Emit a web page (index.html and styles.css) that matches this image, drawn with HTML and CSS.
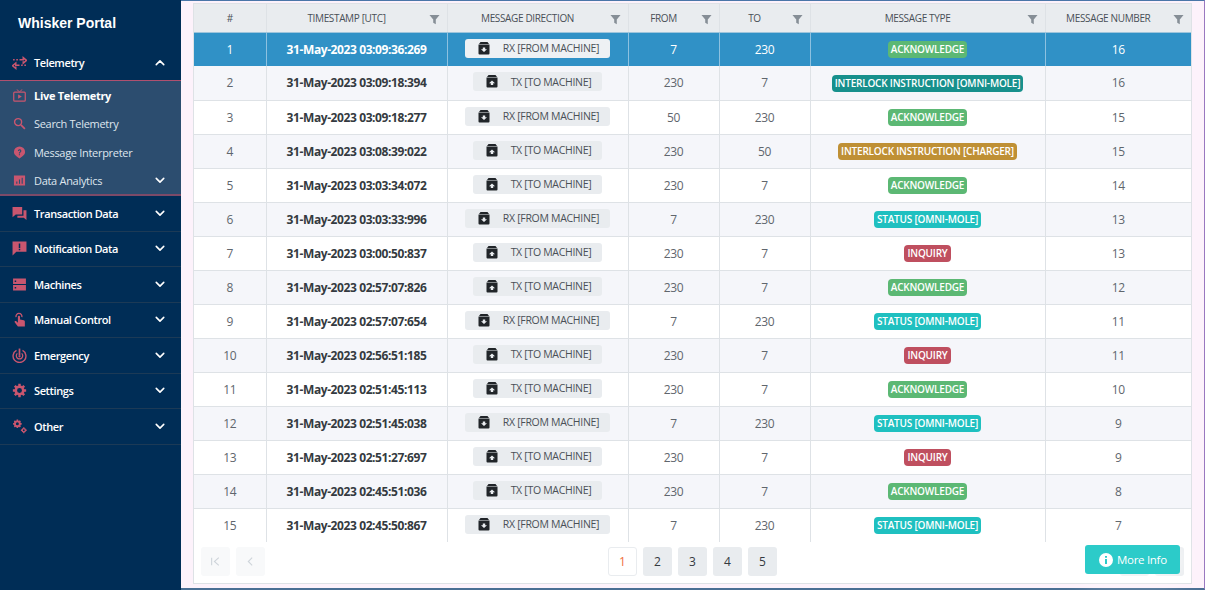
FILE: index.html
```html
<!DOCTYPE html>
<html lang="en">
<head>
    <meta charset="UTF-8">
    <meta name="viewport" content="width=device-width, initial-scale=1.0">
    <title>Whisker Portal</title>
    <link rel="stylesheet" href="styles.css">
</head>
<body>

    <svg class="sprites" width="0" height="0">
        <symbol id="i-chev-down" viewBox="0 0 12 8"><path d="M1.5 1.5 6 6l4.5-4.5" fill="none" stroke="currentColor" stroke-width="1.9" stroke-linecap="round" stroke-linejoin="round"/></symbol>
        <symbol id="i-chev-up" viewBox="0 0 12 8"><path d="M1.5 6.5 6 2l4.5 4.5" fill="none" stroke="currentColor" stroke-width="1.9" stroke-linecap="round" stroke-linejoin="round"/></symbol>
        <symbol id="i-funnel" viewBox="0 0 12 12"><path d="M.5 1h11L7.4 6v5.2L4.6 9.6V6z" fill="currentColor"/></symbol>
        <symbol id="i-rx" viewBox="0 0 12 13"><path d="M2.5 0h7L11 2H1z" fill="currentColor"/><path fill-rule="evenodd" d="M.5 2.500h11v9a1 1 0 0 1-1 1h-9a1 1 0 0 1-1-1zM4.800 5.500v1.700H3L6 10l3-2.800H7.200V5.500z" fill="currentColor"/></symbol>
        <symbol id="i-tx" viewBox="0 0 12 13"><path d="M2.5 0h7L11 2H1z" fill="currentColor"/><path fill-rule="evenodd" d="M.5 2.500h11v9a1 1 0 0 1-1 1h-9a1 1 0 0 1-1-1zM4.800 10V8.300H3L6 5.500l3 2.800H7.200V10z" fill="currentColor"/></symbol>
    </svg>

    <div class="app">
        <aside class="sidebar">
            <div class="brand">Whisker Portal</div>

            <div class="nav-item open">
                <svg class="nav-icon" viewBox="0 0 14 14"><path d="M1 4.500h1.500M4 4.500h1.500M7 4.500h3.500V2.500L13.500 5 10.500 7.500V5.800" fill="none" stroke="currentColor" stroke-width="1.400"/><path d="M13 9.500h-1.500M10 9.500H8.500M7 9.500H3.500V7.500L.5 10l3 2.500v-1.700" fill="none" stroke="currentColor" stroke-width="1.400"/></svg>
                <span class="nav-label">Telemetry</span>
                <svg class="nav-chev"><use href="#i-chev-up"/></svg>
            </div>
            <div class="subnav">
                <div class="sub-item active">
                    <svg class="sub-icon" viewBox="0 0 14 14"><path d="M4 .5 7 3l3-2.500" fill="none" stroke="currentColor" stroke-width="1"/><rect x=".8" y="3.300" width="12.400" height="9.700" rx="1" fill="none" stroke="currentColor" stroke-width="1.300"/><path d="M5.500 5.800v4.700L9.500 8z" fill="currentColor"/></svg>
                    <span>Live Telemetry</span>
                </div>
                <div class="sub-item">
                    <svg class="sub-icon" viewBox="0 0 14 14"><circle cx="5.500" cy="5.500" r="3.800" fill="none" stroke="currentColor" stroke-width="1.500"/><path d="m8.500 8.500 4.300 4.300" stroke="currentColor" stroke-width="1.800"/></svg>
                    <span>Search Telemetry</span>
                </div>
                <div class="sub-item">
                    <svg class="sub-icon" viewBox="0 0 14 14"><path fill-rule="evenodd" d="M7 .5a6 6 0 0 1 6 6c0 3-3 5-6 7-3-2-6-4-6-7a6 6 0 0 1 6-6zM5.300 5.300c0-2.300 3.700-2.300 3.700 0 0 1.400-1.500 1.300-1.500 2.700H6.300c0-1.900 1.500-1.800 1.500-2.700 0-.8-1.300-.8-1.300 0zM6.300 8.800h1.200V10H6.300z" fill="currentColor"/></svg>
                    <span>Message Interpreter</span>
                </div>
                <div class="sub-item">
                    <svg class="sub-icon" viewBox="0 0 14 14"><path fill-rule="evenodd" d="M1 1.500h12v11H1zM3.500 8v2.500h1.200V8zM6.400 6v4.500h1.200V6zM9.300 4v6.500h1.200V4z" fill="currentColor"/></svg>
                    <span>Data Analytics</span>
                    <svg class="nav-chev"><use href="#i-chev-down"/></svg>
                </div>
            </div>

            <div class="nav-item">
                <svg class="nav-icon" viewBox="0 0 14 14"><path d="M.5 1h9v7h-6L.5 10.500z" fill="currentColor"/><path d="M10.700 4h2.800v9L11 11H5V9.200h5.700z" fill="currentColor"/></svg>
                <span class="nav-label">Transaction Data</span>
                <svg class="nav-chev"><use href="#i-chev-down"/></svg>
            </div>
            <div class="nav-item">
                <svg class="nav-icon" viewBox="0 0 14 14"><path fill-rule="evenodd" d="M.5.500h13V10H4L.5 13.500zM6.300 2.300v4.200h1.400V2.300zM6.300 7.300v1.400h1.400V7.300z" fill="currentColor"/></svg>
                <span class="nav-label">Notification Data</span>
                <svg class="nav-chev"><use href="#i-chev-down"/></svg>
            </div>
            <div class="nav-item">
                <svg class="nav-icon" viewBox="0 0 14 14"><path fill-rule="evenodd" d="M1 1.500h12v5H1zM2.500 3.300v1.400h1.400V3.300zM1 7.500h12v5H1zM2.500 9.300v1.400h1.400V9.300z" fill="currentColor"/></svg>
                <span class="nav-label">Machines</span>
                <svg class="nav-chev"><use href="#i-chev-down"/></svg>
            </div>
            <div class="nav-item">
                <svg class="nav-icon" viewBox="0 0 14 14"><path d="M5.500 4.500a1 1 0 0 1 2 0V7l3.500.8c.7.200 1 .7 1 1.400V13.500H5.500L2.500 9.500c-.5-.8.500-1.600 1.300-1L5.500 10z" fill="currentColor"/><path d="M3.800 4.800a2.800 2.800 0 1 1 5.400 0" fill="none" stroke="currentColor" stroke-width="1.200"/></svg>
                <span class="nav-label">Manual Control</span>
                <svg class="nav-chev"><use href="#i-chev-down"/></svg>
            </div>
            <div class="nav-item">
                <svg class="nav-icon" viewBox="0 0 14 14"><path d="M4.200 2.200a6 6 0 1 0 5.600 0" fill="none" stroke="currentColor" stroke-width="1.300"/><path d="M5 5a3 3 0 1 0 4 0" fill="none" stroke="currentColor" stroke-width="1.200"/><path d="M7 .5v6.500" stroke="currentColor" stroke-width="1.600"/><circle cx="7" cy="7.800" r="1" fill="currentColor"/></svg>
                <span class="nav-label">Emergency</span>
                <svg class="nav-chev"><use href="#i-chev-down"/></svg>
            </div>
            <div class="nav-item">
                <svg class="nav-icon" viewBox="0 0 14 14"><circle cx="7" cy="7" r="3.500" fill="none" stroke="currentColor" stroke-width="2.400"/><path d="M7 .8v2.400M7 10.800v2.400M.8 7h2.400M10.800 7h2.400M2.600 2.600l1.700 1.700M9.700 9.700l1.700 1.700M2.600 11.400l1.700-1.700M9.700 4.300l1.700-1.700" stroke="currentColor" stroke-width="2.300"/></svg>
                <span class="nav-label">Settings</span>
                <svg class="nav-chev"><use href="#i-chev-down"/></svg>
            </div>
            <div class="nav-item">
                <svg class="nav-icon" viewBox="0 0 14 14"><circle cx="5" cy="4.500" r="2.300" fill="none" stroke="currentColor" stroke-width="1.800"/><path d="M5 .5v1.500M5 7v1.500M1 4.500h1.500M7.500 4.500H9M2.200 1.700l1 1M6.800 6.300l1 1M2.200 7.300l1-1M6.800 2.700l1-1" stroke="currentColor" stroke-width="1.500"/><circle cx="11" cy="10.500" r="1.500" fill="none" stroke="currentColor" stroke-width="1.300"/><path d="M11 7.800v1M11 12.200v1M8.300 10.500h1M12.700 10.500h1" stroke="currentColor" stroke-width="1.200"/></svg>
                <span class="nav-label">Other</span>
                <svg class="nav-chev"><use href="#i-chev-down"/></svg>
            </div>
        </aside>

        <main class="main">
            <div class="card">
                <table class="grid">
                    <colgroup>
                        <col class="col-num"><col class="col-time"><col class="col-dir"><col class="col-from"><col class="col-to"><col class="col-type"><col class="col-msg">
                    </colgroup>
                    <thead>
                        <tr>
                            <th>#</th>
                            <th class="has-filter">TIMESTAMP [UTC]<svg class="funnel"><use href="#i-funnel"/></svg></th>
                            <th class="has-filter">MESSAGE DIRECTION<svg class="funnel"><use href="#i-funnel"/></svg></th>
                            <th class="has-filter">FROM<svg class="funnel"><use href="#i-funnel"/></svg></th>
                            <th class="has-filter">TO<svg class="funnel"><use href="#i-funnel"/></svg></th>
                            <th class="has-filter">MESSAGE TYPE<svg class="funnel"><use href="#i-funnel"/></svg></th>
                            <th class="has-filter">MESSAGE NUMBER<svg class="funnel"><use href="#i-funnel"/></svg></th>
                        </tr>
                    </thead>
                    <tbody id="rows"></tbody>
                </table>

                <div class="pager">
                    <div class="pager-left">
                        <button class="page-btn disabled"><svg viewBox="0 0 10 10"><path d="M1.500 1.500v7M8 1.500 4 5l4 3.500" fill="none" stroke="currentColor"/></svg></button>
                        <button class="page-btn disabled"><svg viewBox="0 0 10 10"><path d="M6.500 1.500 3 5l3.500 3.500" fill="none" stroke="currentColor"/></svg></button>
                    </div>
                    <div class="pager-pages">
                        <button class="page-btn current">1</button>
                        <button class="page-btn">2</button>
                        <button class="page-btn">3</button>
                        <button class="page-btn">4</button>
                        <button class="page-btn">5</button>
                    </div>
                    <div class="pager-right">
                        <button class="page-btn"></button>
                        <button class="page-btn"></button>
                    </div>
                </div>
            </div>

            <button class="more-info">
                <svg viewBox="0 0 14 14"><path fill-rule="evenodd" d="M7 0a7 7 0 1 1 0 14A7 7 0 0 1 7 0zM6 3v1.800h2V3zM6 6v5h2V6z" fill="currentColor"/></svg>
                More Info
            </button>
        </main>
    </div>

    <script>
        const RX = "RX";
        const TX = "TX";
        const types = {
            ack: ["ACKNOWLEDGE", "badge-ack"],
            omni: ["INTERLOCK INSTRUCTION [OMNI-MOLE]", "badge-omni"],
            charger: ["INTERLOCK INSTRUCTION [CHARGER]", "badge-charger"],
            status: ["STATUS [OMNI-MOLE]", "badge-status"],
            inquiry: ["INQUIRY", "badge-inquiry"]
        };

        const data = [
            ["31-May-2023 03:09:36:269", RX, 7, 230, "ack", 16],
            ["31-May-2023 03:09:18:394", TX, 230, 7, "omni", 16],
            ["31-May-2023 03:09:18:277", RX, 50, 230, "ack", 15],
            ["31-May-2023 03:08:39:022", TX, 230, 50, "charger", 15],
            ["31-May-2023 03:03:34:072", TX, 230, 7, "ack", 14],
            ["31-May-2023 03:03:33:996", RX, 7, 230, "status", 13],
            ["31-May-2023 03:00:50:837", TX, 230, 7, "inquiry", 13],
            ["31-May-2023 02:57:07:826", TX, 230, 7, "ack", 12],
            ["31-May-2023 02:57:07:654", RX, 7, 230, "status", 11],
            ["31-May-2023 02:56:51:185", TX, 230, 7, "inquiry", 11],
            ["31-May-2023 02:51:45:113", TX, 230, 7, "ack", 10],
            ["31-May-2023 02:51:45:038", RX, 7, 230, "status", 9],
            ["31-May-2023 02:51:27:697", TX, 230, 7, "inquiry", 9],
            ["31-May-2023 02:45:51:036", TX, 230, 7, "ack", 8],
            ["31-May-2023 02:45:50:867", RX, 7, 230, "status", 7]
        ];

        document.getElementById("rows").innerHTML = data.map((row, i) => {
            const dir = row[1] === RX
                ? '<svg><use href="#i-rx"/></svg><span>RX [FROM MACHINE]</span>'
                : '<svg><use href="#i-tx"/></svg><span>TX [TO MACHINE]</span>';
            const type = types[row[4]];
            return `<tr class="${i === 0 ? "selected" : ""}">
                <td>${i + 1}</td>
                <td class="stamp">${row[0]}</td>
                <td><span class="dir-btn">${dir}</span></td>
                <td>${row[2]}</td>
                <td>${row[3]}</td>
                <td><span class="badge ${type[1]}">${type[0]}</span></td>
                <td>${row[5]}</td>
            </tr>`;
        }).join("");
    </script>

</body>
</html>
```

FILE: styles.css
```css
* {
    box-sizing: border-box;
}
body {
    margin: 0;
    font-family: "Open Sans", "Noto Sans", sans-serif;
    background-color: #fdf2fb;
    overflow: hidden;
}
.sprites {
    position: absolute;
}
.app {
    display: flex;
    height: 590px;
}

/* sidebar */
.sidebar {
    width: 181px;
    flex: none;
    background: #002d56;
    color: #fff;
}
.brand {
    height: 45.5px;
    padding: 14px 0 0 18px;
    font-family: "Liberation Sans", Arial, sans-serif;
    font-size: 14px;
    font-weight: 700;
    line-height: 18px;
}
.nav-item {
    display: flex;
    align-items: center;
    height: 35.5px;
    padding-left: 12px;
    border-bottom: 1px solid #1c3a56;
    font-size: 11px;
    font-weight: 600;
    letter-spacing: -0.4px;
}
.nav-item.open {
    border-bottom: 1px solid #b0506f;
}
.nav-icon {
    width: 15px;
    height: 15px;
    margin-right: 7px;
    flex: none;
    color: #c9566f;
}
.nav-label {
    flex: 1;
}
.nav-chev {
    width: 10px;
    height: 7px;
    margin-right: 16px;
    flex: none;
    color: #fff;
}
.subnav {
    background: #2c4d6f;
    border-bottom: 2px solid #7c4a68;
    height: 115px;
}
.sub-item {
    display: flex;
    align-items: center;
    height: 28.5px;
    padding-left: 13px;
    color: #dfe6ee;
    font-size: 11px;
    letter-spacing: -0.3px;
}
.sub-item span {
    flex: 1;
}
.sub-item.active {
    color: #fff;
    font-weight: 700;
}
.sub-icon {
    width: 13px;
    height: 13px;
    margin-right: 8px;
    flex: none;
    color: #c9566f;
}

/* table card */
.main {
    flex: 1;
    position: relative;
    padding: 2px 12px 0;
    border-top: 1px solid #4a76a8;
    border-bottom: 2px solid #4a6f94;
    border-right: 1px solid #9a78c0;
    min-width: 0;
}
.card {
    height: 581px;
    background: #fff;
    border: 1px solid #dee2e6;
}
.grid {
    width: 100%;
    border-collapse: collapse;
    table-layout: fixed;
    font-size: 12px;
    letter-spacing: -0.3px;
    color: #5f666d;
}
.col-num { width: 72px; }
.col-time { width: 181px; }
.col-dir { width: 181px; }
.col-from { width: 91px; }
.col-to { width: 91px; }
.col-type { width: 235px; }
.grid th {
    position: relative;
    height: 28px;
    padding: 0;
    background: #e9ecef;
    border-right: 1px solid #dee2e6;
    border-bottom: 1px solid #9ec5dc;
    font-size: 10px;
    font-weight: 400;
    letter-spacing: -0.35px;
    color: #495057;
    text-align: center;
}
.grid th.has-filter {
    padding-right: 20px;
}
.funnel {
    position: absolute;
    top: 10px;
    right: 7px;
    width: 11px;
    height: 11px;
    color: #868e96;
}
.grid td {
    height: 34px;
    padding: 0;
    border-right: 1px solid #dee2e6;
    border-bottom: 1px solid #dee2e6;
    text-align: center;
}
.grid th:last-child,
.grid td:last-child {
    border-right: 0;
}
.grid tbody tr:nth-child(even) td {
    background: #f5f6fa;
}
.grid tbody tr:last-child td {
    border-bottom: 0;
}
.grid td.stamp {
    font-weight: 700;
    letter-spacing: -0.4px;
    color: #343a40;
}
.grid tbody tr.selected td {
    background: #3091c6;
    border-right-color: #8dc1e0;
    border-bottom: 0;
    color: #fff;
}
.dir-btn {
    display: inline-flex;
    align-items: center;
    height: 19px;
    padding: 0 11px 0 13px;
    position: relative;
    top: -1px;
    vertical-align: middle;
    background: #e9ecef;
    border-radius: 3px;
    color: #495057;
    font-size: 10.5px;
}
.grid tr.selected .dir-btn {
    background: #eef1f4;
    color: #495057;
}
.dir-btn svg {
    width: 12px;
    height: 13px;
    margin-right: 13px;
    color: #212529;
}
.badge {
    display: inline-block;
    padding: 0 3px;
    height: 17px;
    line-height: 16px;
    vertical-align: middle;
    border-radius: 4px;
    color: #fff;
    font-size: 10px;
    font-weight: 600;
    letter-spacing: -0.2px;
}
.badge-ack { background: #5cb874; }
.badge-omni { background: #17908c; }
.badge-charger { background: #bf9035; }
.badge-status { background: #1fc0c0; }
.badge-inquiry { background: #bf4f5f; }

/* pagination */
.pager {
    display: flex;
    align-items: center;
    justify-content: space-between;
    height: 38px;
    padding: 0 7px;
}
.pager-left,
.pager-pages,
.pager-right {
    display: flex;
    gap: 6px;
}
.page-btn {
    display: flex;
    align-items: center;
    justify-content: center;
    width: 29px;
    height: 29px;
    padding: 0;
    background: #e9ecef;
    border: 0;
    border-radius: 3px;
    color: #343a40;
    font-family: inherit;
    font-size: 12px;
}
.page-btn svg {
    width: 11px;
    height: 11px;
}
.page-btn.disabled {
    background: #f8f9fa;
    color: #ced4da;
}
.page-btn.current {
    background: #fff;
    border: 1px solid #e9ecef;
    color: #f0703c;
}
.more-info {
    position: absolute;
    left: 904px;
    top: 544px;
    display: flex;
    align-items: center;
    gap: 4px;
    width: 95px;
    height: 29px;
    padding: 0 0 0 14px;
    background: #2ccbc9;
    border: 0;
    border-radius: 3px;
    box-shadow: 0 0 24px rgba(255, 255, 255, 0.9);
    color: #fff;
    font-family: inherit;
    font-size: 11.5px;
    font-weight: 400;
    letter-spacing: -0.3px;
}
.more-info svg {
    width: 14px;
    height: 14px;
}
```
